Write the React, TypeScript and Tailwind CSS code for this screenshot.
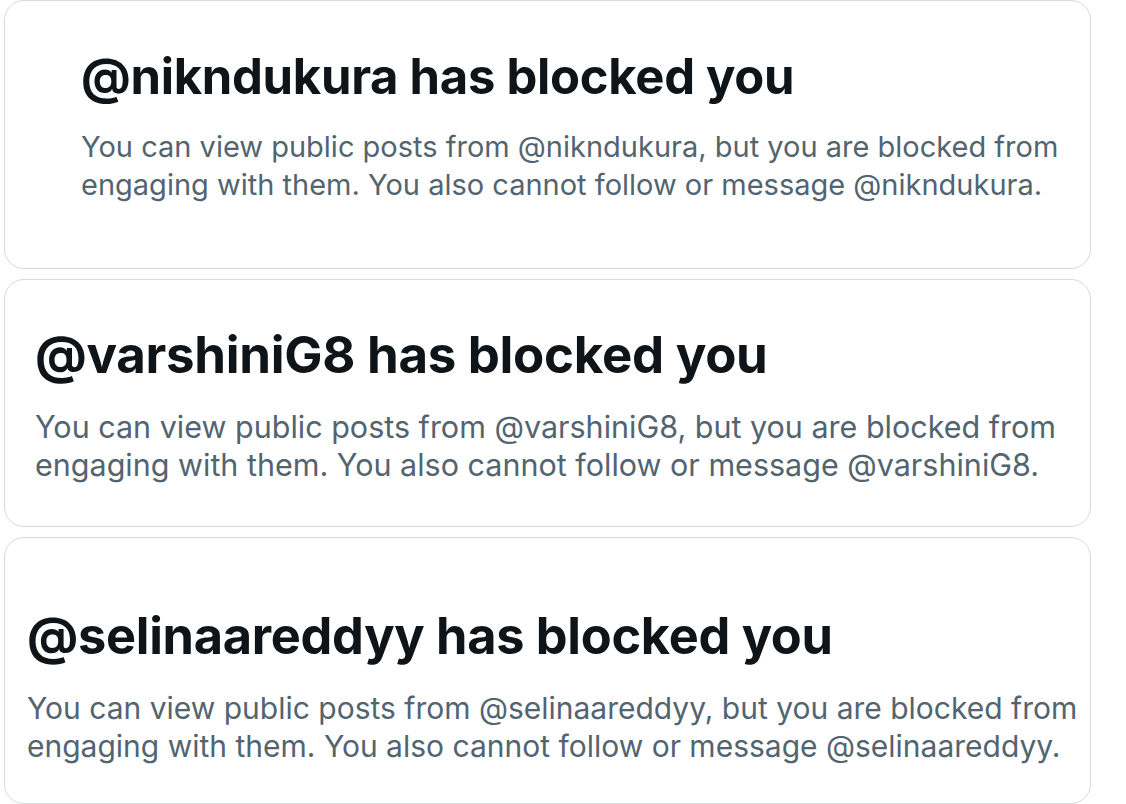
const cards = [
  {
    handle: 'nikndukura',
    box: 'h-[269px] pl-[76px] pt-[47px]',
    title: 'text-[49px] leading-[58px]',
    body: 'mt-[22px] text-[29px]',
  },
  {
    handle: 'varshiniG8',
    box: 'h-[248px] pl-[30px] pt-[45px]',
    title: 'text-[51px] leading-[60px]',
    body: 'mt-[23px] text-[30.5px]',
  },
  {
    handle: 'selinaareddyy',
    box: 'h-[267px] pl-[22px] pt-[68px]',
    title: 'text-[50.5px] leading-[60px]',
    body: 'mt-[23px] text-[30px]',
  },
];

export default function App() {
  return (
    <div className="min-h-screen w-[1126px] bg-white pl-[4px] pr-[35px] font-['Inter',sans-serif]">
      <div className="flex flex-col gap-[10px]">
        {cards.map((c) => (
          <BlockedCard key={c.handle} {...c} />
        ))}
      </div>
    </div>
  );
}

function BlockedCard({ handle, box, title, body }: { handle: string; box: string; title: string; body: string }) {
  return (
    <div className={`rounded-[20px] border border-[#d6dadd] bg-white ${box}`}>
      <h2 className={`${title} font-bold tracking-[-0.3px] whitespace-nowrap text-[#0f1419]`}>
        @{handle} has blocked you
      </h2>
      <p className={`${body} leading-[38px] whitespace-nowrap text-[#536471]`}>
        You can view public posts from @{handle}, but you are blocked from
        <br />
        engaging with them. You also cannot follow or message @{handle}.
      </p>
    </div>
  );
}
